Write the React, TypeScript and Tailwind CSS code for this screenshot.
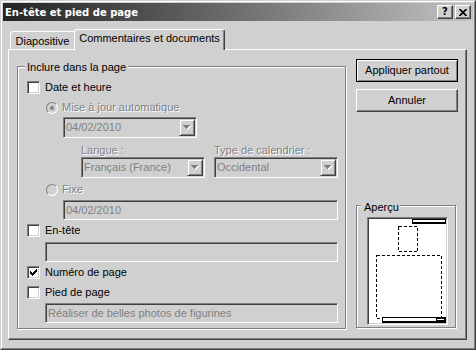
import React from 'react'

const sunken = 'border border-t-[#808080] border-l-[#808080] border-r-white border-b-white shadow-[inset_1px_1px_0_#404040,inset_-1px_-1px_0_#d0d0d0] p-[1px]'
const raisedSmall = 'border border-t-[#d0d0d0] border-l-[#d0d0d0] border-r-[#404040] border-b-[#404040] shadow-[inset_1px_1px_0_#fff,inset_-1px_-1px_0_#808080] bg-[#d0d0d0]'
const etched = 'border border-[#808080] shadow-[inset_1px_1px_0_#fff,1px_1px_0_#fff]'
const disabled = 'text-[#808080] [text-shadow:1px_1px_0_#fff]'

const Arrow = () => (
  <svg width="8" height="5" viewBox="0 0 8 5" shapeRendering="crispEdges">
    <polygon points="1,1 8,1 4.5,5" fill="#fff" />
    <polygon points="0,0 7,0 3.5,4" fill="#808080" />
  </svg>
)

const Combo = ({ value, className }: { value: string, className?: string }) => (
  <div className={`flex h-[21px] bg-[#d0d0d0] ${sunken} ${className ?? ''}`}>
    <span className="flex-1 truncate pl-[1px] pt-[2px] text-[#808080]">{value}</span>
    <div className={`flex h-[17px] w-[16px] items-center justify-center ${raisedSmall}`}>
      <Arrow />
    </div>
  </div>
)

const TextBox = ({ value, className }: { value?: string, className?: string }) => (
  <div className={`h-[20px] bg-[#d0d0d0] ${sunken} ${className ?? ''}`}>
    <span className="block truncate pl-[1px] pt-[2px] text-[#808080]">{value}</span>
  </div>
)

const CheckBox = ({ label, checked, className }: { label: string, checked?: boolean, className?: string }) => (
  <div className={`flex h-[13px] items-center ${className ?? ''}`}>
    <div className={`h-[13px] w-[13px] bg-white ${sunken}`}>
      {checked && (
        <svg width="9" height="9" viewBox="0 0 9 9" shapeRendering="crispEdges">
          <rect x="1" y="3" width="1" height="3" />
          <rect x="2" y="4" width="1" height="3" />
          <rect x="3" y="5" width="1" height="3" />
          <rect x="4" y="4" width="1" height="3" />
          <rect x="5" y="3" width="1" height="3" />
          <rect x="6" y="2" width="1" height="3" />
          <rect x="7" y="1" width="1" height="3" />
        </svg>
      )}
    </div>
    <span className="ml-[5px]">{label}</span>
  </div>
)

const Radio = ({ label, selected, className }: { label: string, selected?: boolean, className?: string }) => (
  <div className={`flex h-[13px] items-center ${className ?? ''}`}>
    <div className="flex h-[12px] w-[12px] items-center justify-center rounded-full border border-t-[#808080] border-l-[#808080] border-r-white border-b-white bg-[#d0d0d0]">
      {selected && <div className="h-[4px] w-[4px] rounded-full bg-[#808080]" />}
    </div>
    <span className={`ml-[4px] ${disabled}`}>{label}</span>
  </div>
)

const Preview = () => (
  <svg width="77" height="104" viewBox="0 0 77 104" shapeRendering="crispEdges">
    <rect x="43" y="0" width="34" height="5" fill="#000" />
    <rect x="44" y="1" width="32" height="2" fill="#fff" />
    <rect x="29.5" y="7.5" width="19" height="25" fill="none" stroke="#000" strokeDasharray="3 2" />
    <rect x="7.5" y="36.5" width="65" height="63" fill="none" stroke="#000" strokeDasharray="3 2" />
    <rect x="13" y="98" width="64" height="6" fill="#000" />
    <rect x="14" y="99" width="53" height="3" fill="#fff" />
    <rect x="68" y="100" width="7" height="1" fill="#fff" />
  </svg>
)

export default function App() {
  return (
    <div className="h-[350px] w-[476px] border border-t-[#d0d0d0] border-l-[#d0d0d0] border-r-[#404040] border-b-[#404040] bg-[#d0d0d0] font-['Liberation_Sans',Arial,sans-serif] text-[11px] leading-[13px] text-black">
      <div className="flex h-full flex-col border border-t-white border-l-white border-r-[#808080] border-b-[#808080] p-[1px]">
        {/* title bar */}
        <div className="flex h-[18px] shrink-0 items-center bg-linear-to-r from-[#242424] to-[#c4c4c4] px-[2px]">
          <span className="mt-[2px] font-['DejaVu_Sans',sans-serif] text-[10px] leading-[12px] font-bold text-white">En-tête et pied de page</span>
          <div className="ml-auto flex gap-[2px]">
            <div className="flex h-[14px] w-[16px] items-center justify-center border border-t-white border-l-white border-r-[#404040] border-b-[#404040] bg-[#d0d0d0] font-['DejaVu_Sans',sans-serif] text-[10px] leading-none font-bold shadow-[inset_-1px_-1px_0_#808080]">?</div>
            <div className="flex h-[14px] w-[16px] items-center justify-center border border-t-white border-l-white border-r-[#404040] border-b-[#404040] bg-[#d0d0d0] shadow-[inset_-1px_-1px_0_#808080]">
              <svg width="8" height="7" viewBox="0 0 8 7">
                <path d="M0.5 0 L7.5 7 M7.5 0 L0.5 7" stroke="#000" strokeWidth="1.7" />
              </svg>
            </div>
          </div>
        </div>

        {/* tabs */}
        <div className="ml-[7px] mt-[8px] flex h-[21px] shrink-0 items-end">
          <div className="mb-[1px] flex h-[18px] w-[64px] justify-center rounded-tl-[3px] border-t border-l border-white pt-[3px]">Diapositive</div>
          <div className="relative z-10 flex h-[21px] w-[151px] justify-center rounded-t-[3px] border-t border-l border-r border-t-white border-l-white border-r-[#404040] bg-[#d0d0d0] pt-[2px] shadow-[inset_-1px_0_0_#808080]">Commentaires et documents</div>
        </div>

        {/* panel */}
        <div className="-mt-[1px] ml-[5px] flex h-[291px] w-[459px] shrink-0 items-start border border-t-white border-l-white border-r-[#404040] border-b-[#404040] shadow-[inset_-1px_-1px_0_#808080]">
          <div className={`relative ml-[8px] mt-[16px] flex h-[263px] w-[329px] flex-col ${etched}`}>
            <span className="absolute -top-[6px] left-[7px] bg-[#d0d0d0] px-[2px]">Inclure dans la page</span>

            <CheckBox label="Date et heure" className="ml-[9px] mt-[14px]" />
            <Radio label="Mise à jour automatique" selected className="ml-[28px] mt-[7px]" />
            <Combo value="04/02/2010" className="ml-[45px] mt-[3px] w-[134px]" />
            <div className="ml-[63px] mt-[6px] grid grid-cols-[124px_124px] gap-x-[9px]">
              <span className={disabled}>Langue :</span>
              <span className={disabled}>Type de calendrier :</span>
              <Combo value="Français (France)" />
              <Combo value="Occidental" />
            </div>
            <Radio label="Fixe" className="ml-[28px] mt-[5px]" />
            <TextBox value="04/02/2010" className="ml-[45px] mt-[4px] w-[275px]" />
            <CheckBox label="En-tête" className="ml-[9px] mt-[4px]" />
            <TextBox className="ml-[27px] mt-[5px] w-[293px]" />
            <CheckBox label="Numéro de page" checked className="ml-[9px] mt-[4px]" />
            <CheckBox label="Pied de page" className="ml-[9px] mt-[7px]" />
            <TextBox value="Réaliser de belles photos de figurines" className="ml-[27px] mt-[4px] w-[293px]" />
          </div>

          <div className="ml-[10px] mt-[9px] flex w-[102px] flex-col">
            <button className="flex h-[23px] items-center justify-center border border-black bg-[#d0d0d0] shadow-[inset_1px_1px_0_#fff,inset_-1px_-1px_0_#808080]">Appliquer partout</button>
            <button className="mt-[7px] flex h-[23px] items-center justify-center border border-t-white border-l-white border-r-[#404040] border-b-[#404040] bg-[#d0d0d0] shadow-[inset_-1px_-1px_0_#808080]">Annuler</button>
            <div className={`relative mt-[93px] h-[123px] w-[100px] ${etched}`}>
              <span className="absolute -top-[5px] left-[4px] bg-[#d0d0d0] pl-[3px] pr-[1px]">Aperçu</span>
              <div className={`ml-[10px] mt-[11px] h-[108px] w-[81px] bg-white ${sunken}`}>
                <Preview />
              </div>
            </div>
          </div>
        </div>
      </div>
    </div>
  )
}
